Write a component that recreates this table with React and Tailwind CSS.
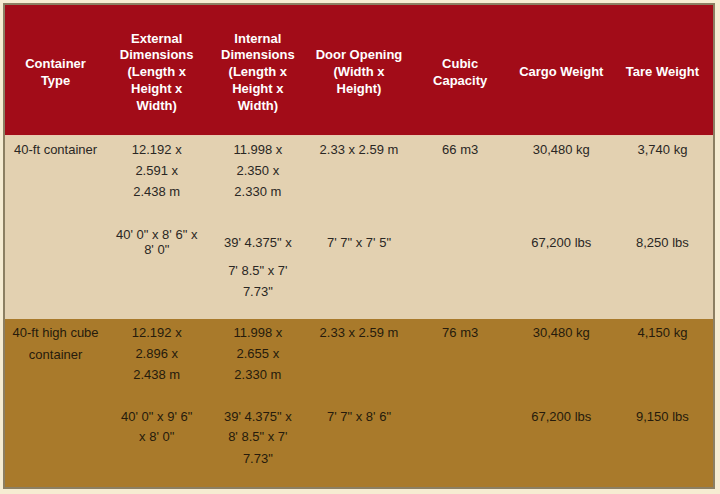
const headers = [
  ["Container", "Type"],
  ["External", "Dimensions", "(Length x", "Height x", "Width)"],
  ["Internal", "Dimensions", "(Length x", "Height x", "Width)"],
  ["Door Opening", "(Width x", "Height)"],
  ["Cubic", "Capacity"],
  ["Cargo Weight"],
  ["Tare Weight"],
];

// each line: [text, marginTop, lineHeight]
const rows = [
  {
    bg: "bg-[#e3d1b1]",
    text: "text-[#2a2724]",
    height: "h-[184px]",
    pad: "pt-[3px]",
    cells: [
      [["40-ft container", 0, 21]],
      [["12.192 x", 0, 21], ["2.591 x", 0, 21], ["2.438 m", 0, 21], ["40' 0\" x 8' 6\" x", 25, 15], ["8' 0\"", 0, 15]],
      [["11.998 x", 0, 21], ["2.350 x", 0, 21], ["2.330 m", 0, 21], ["39' 4.375\" x", 30, 21], ["7' 8.5\" x 7'", 7, 21], ["7.73\"", 0, 21]],
      [["2.33 x 2.59 m", 0, 21], ["7' 7\" x 7' 5\"", 72, 21]],
      [["66 m3", 0, 21]],
      [["30,480 kg", 0, 21], ["67,200 lbs", 72, 21]],
      [["3,740 kg", 0, 21], ["8,250 lbs", 72, 21]],
    ],
  },
  {
    bg: "bg-[#a97a2b]",
    text: "text-[#261b0c]",
    height: "h-[168px]",
    pad: "pt-[3px]",
    cells: [
      [["40-ft high cube", 0, 21], ["container", 1, 21]],
      [["12.192 x", 0, 21], ["2.896 x", 0, 21], ["2.438 m", 0, 21], ["40' 0\" x 9' 6\"", 21, 21], ["x 8' 0\"", 0, 20]],
      [["11.998 x", 0, 21], ["2.655 x", 0, 21], ["2.330 m", 0, 21], ["39' 4.375\" x", 21, 21], ["8' 8.5\" x 7'", 0, 20], ["7.73\"", 1, 21]],
      [["2.33 x 2.59 m", 0, 21], ["7' 7\" x 8' 6\"", 63, 21]],
      [["76 m3", 0, 21]],
      [["30,480 kg", 0, 21], ["67,200 lbs", 63, 21]],
      [["4,150 kg", 0, 21], ["9,150 lbs", 63, 21]],
    ],
  },
];

export default function App() {
  return (
    <div
      className="w-[720px] h-[494px] bg-[#f6ecd2] pt-[3px] pl-[3px]"
      style={{ fontFamily: '"Liberation Sans", Arial, sans-serif' }}
    >
      <div className="w-[712px] border-2 border-[#8c7f62]">
        {/* Header */}
        <div className="grid grid-cols-7 h-[130px] pt-[5px] bg-[#a20c18] text-white font-bold text-[13px] leading-[16.7px]">
          {headers.map((lines, i) => (
            <div key={i} className="flex flex-col items-center justify-center text-center">
              {lines.map((l, j) => (
                <div key={j} className="whitespace-nowrap">
                  {l}
                </div>
              ))}
            </div>
          ))}
        </div>

        {/* Body */}
        {rows.map((row, r) => (
          <div
            key={r}
            className={`grid grid-cols-7 ${row.height} ${row.bg} ${row.text} ${row.pad} text-[13px] ${
              r === 0 ? "border-t border-[#e9c9b0]" : ""
            }`}
          >
            {row.cells.map((cell, c) => (
              <div key={c} className="flex flex-col items-center text-center">
                {cell.map(([t, mt, lh], k) => (
                  <div
                    key={k}
                    className="whitespace-nowrap"
                    style={{ marginTop: mt, lineHeight: `${lh}px` }}
                  >
                    {t}
                  </div>
                ))}
              </div>
            ))}
          </div>
        ))}
      </div>
    </div>
  );
}
